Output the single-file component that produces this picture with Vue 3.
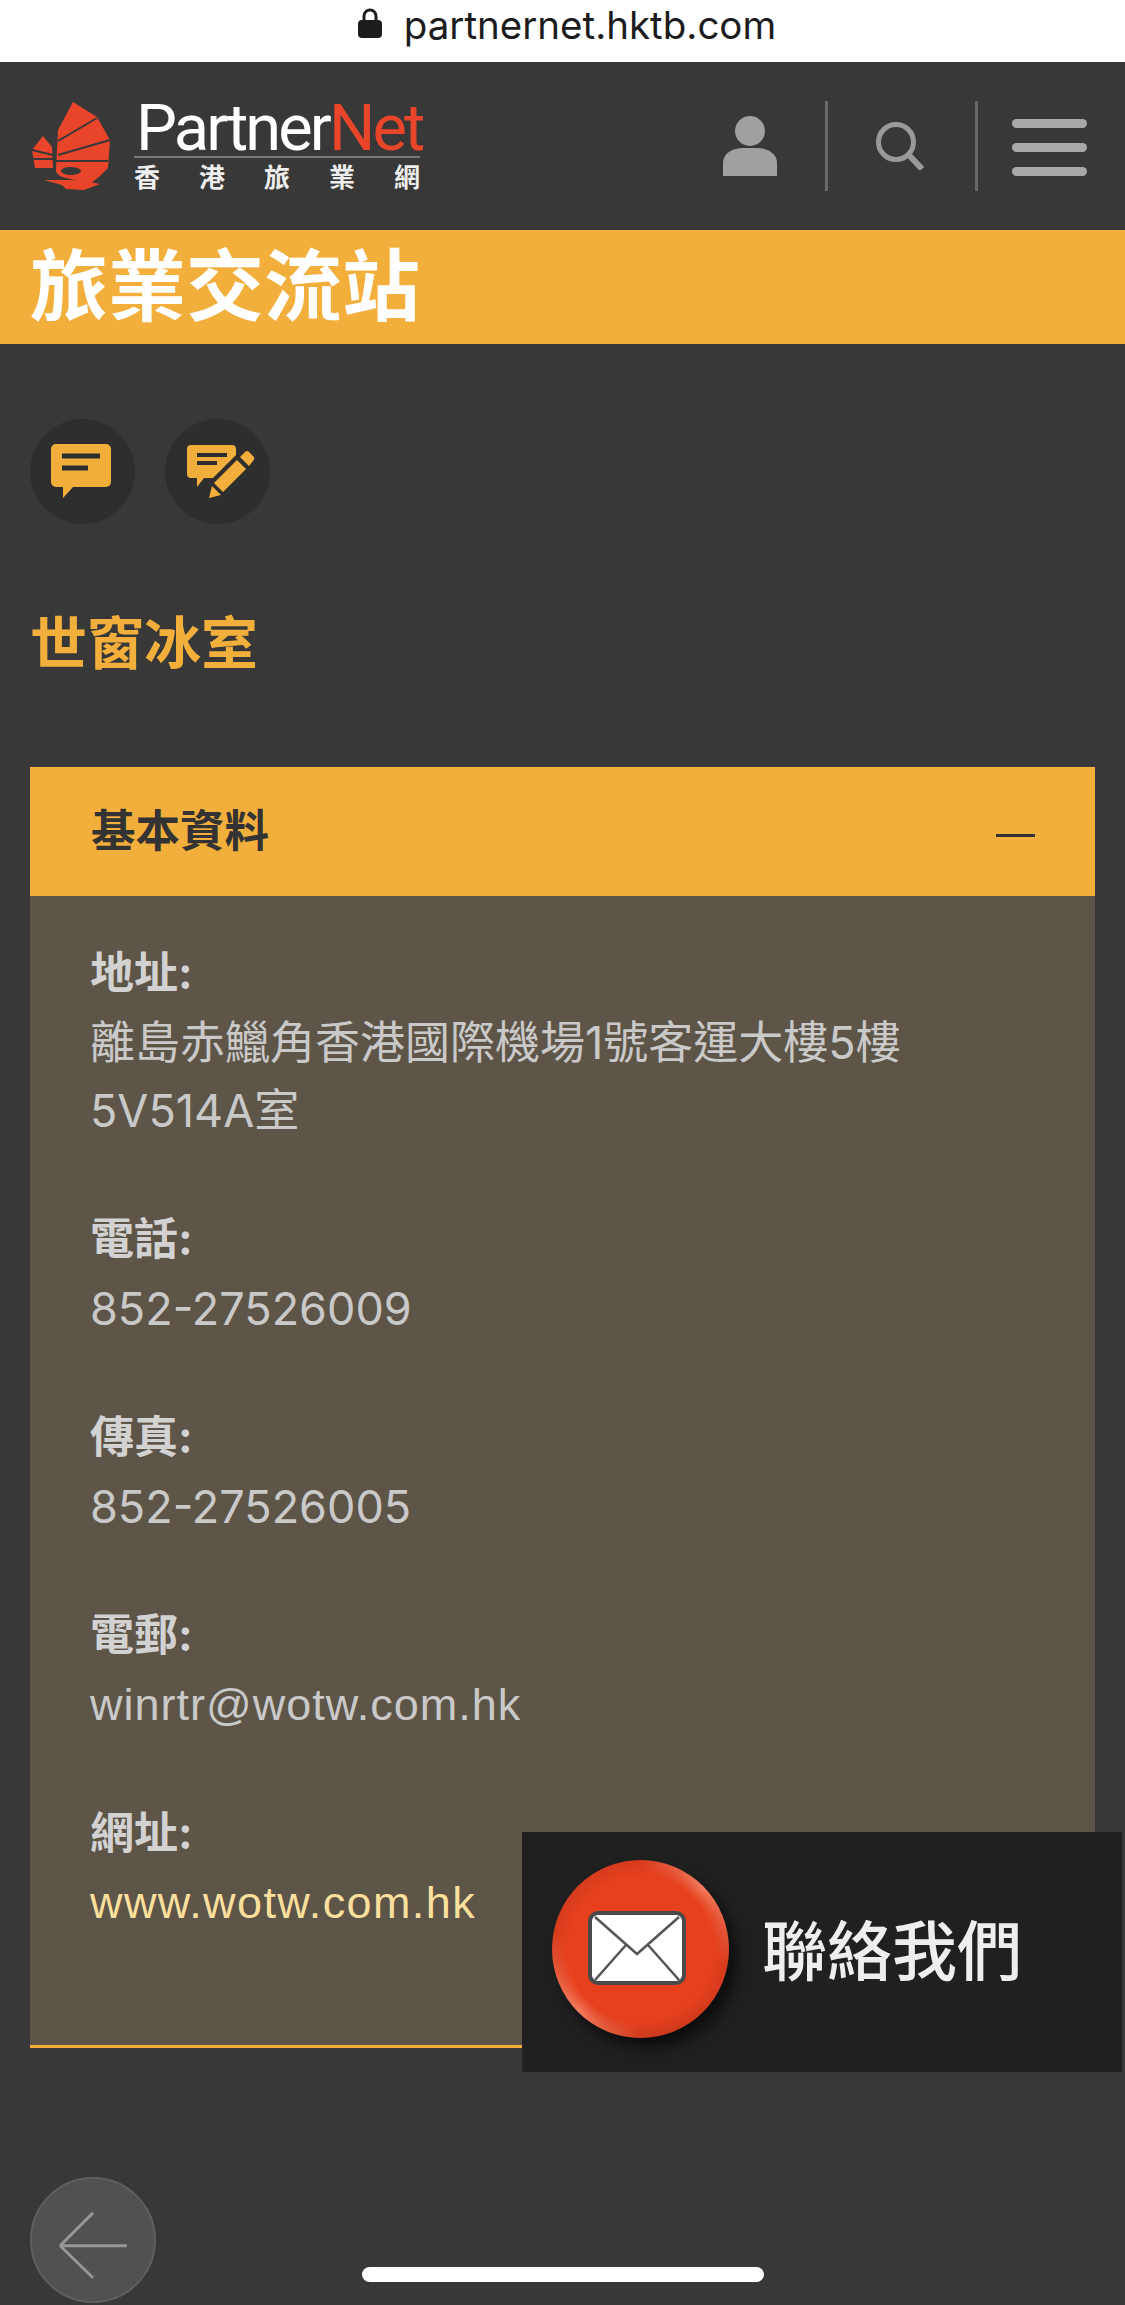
<template>
  <div class="pagina">
    <div class="barra-url">
      <svg class="candado" viewBox="0 0 24 30" width="24" height="30">
        <path d="M6 13V8a6 6 0 0 1 12 0v5" fill="none" stroke="#1c1c1e" stroke-width="3" />
        <rect x="0" y="12" width="24" height="18" rx="4" fill="#1c1c1e" />
      </svg>
      <span>partnernet.hktb.com</span>
    </div>

    <header class="cabecera">
      <div class="logo">
        <svg class="junco" viewBox="0 0 84 92" width="84" height="92">
          <path d="M43 2 67 17 80 40 78 68H26L28 30Z" fill="#e8452a" />
          <path d="M13 36 22 47 23 68H5L2 50Z" fill="#e8452a" />
          <path d="M28 41 67 18M28 55 80 40M2 50 23 55M3 59H23M26 61H78" stroke="#383838" stroke-width="2" fill="none" />
          <path d="M26 68H78L70 76 60 84 36 78 30 76 26 72ZM14 80 40 80 60 82 70 84 54 90 36 89 32 85Z" fill="#e8452a" />
          <ellipse cx="41" cy="71" rx="10" ry="4" fill="#383838" />
        </svg>
        <div class="logo-texto">
          <div class="logo-nombre">Partner<span>Net</span></div>
          <div class="logo-chino">
            <span v-for="c in logoChino" :key="c">{{ c }}</span>
          </div>
        </div>
      </div>
      <nav class="acciones">
        <svg class="icono-usuario" viewBox="0 0 54 60" width="54" height="60">
          <circle cx="27" cy="15" r="15" fill="#a0a0a0" />
          <path d="M0 60V47C0 37 10 32 20 32H34C44 32 54 37 54 47V60Z" fill="#a0a0a0" />
        </svg>
        <i class="separador"></i>
        <svg class="icono-buscar" viewBox="0 0 48 48" width="48" height="48">
          <circle cx="20" cy="20" r="17.500" fill="none" stroke="#999" stroke-width="5" />
          <path d="M32 32 46 47" stroke="#999" stroke-width="6" fill="none" />
        </svg>
        <i class="separador"></i>
        <div class="hamburguesa"><i></i><i></i><i></i></div>
      </nav>
    </header>

    <div class="banda-titulo"><h1>旅業交流站</h1></div>

    <div class="botones">
      <button class="btn-redondo">
        <svg class="icono-mensaje" viewBox="0 0 60 55" width="60" height="55">
          <path d="M5 0H55A5 5 0 0 1 60 5V38A5 5 0 0 1 55 43H22L12 54V43H5A5 5 0 0 1 0 38V5A5 5 0 0 1 5 0Z" fill="#f3af3c" />
          <path d="M11 12H49M11 24H37" stroke="#2e2e2e" stroke-width="5" />
        </svg>
      </button>
      <button class="btn-redondo">
        <svg class="icono-editar" viewBox="0 0 68 54" width="68" height="54">
          <path d="M4 0H45a4 4 0 0 1 4 4V10L26 33H17L10 42V33H4a4 4 0 0 1-4-4V4a4 4 0 0 1 4-4Z" fill="#f3af3c" />
          <path d="M10 10H40M10 18H30" stroke="#2e2e2e" stroke-width="4" />
          <path d="M22 53 25 41 34 50ZM27 38 50 15 59 24 36 47ZM53 12 58 7Q60 5 62 7L67 12Q68 14 66 16L62 21Z" fill="#f3af3c" />
        </svg>
      </button>
    </div>

    <h2 class="nombre-empresa">世窗冰室</h2>

    <section class="panel">
      <div class="panel-cabecera">
        <span>基本資料</span>
        <i class="guion"></i>
      </div>
      <div class="panel-cuerpo">
        <div v-for="d in datos" :key="d.titulo" class="dato">
          <strong>{{ d.titulo }}:</strong>
          <p v-for="l in d.lineas" :key="l" :class="{ enlace: d.enlace, latina: d.latina }">{{ l }}</p>
        </div>
      </div>
    </section>

    <div class="contacto">
      <div class="boton-rojo">
        <svg viewBox="0 0 98 74" width="98" height="74">
          <rect x="2" y="2" width="94" height="70" rx="8" fill="#fff" stroke="#4a4a4a" stroke-width="4" />
          <path d="M7 6 49 43 91 6M7 69 38 34M91 69 60 34" fill="none" stroke="#555" stroke-width="2.500" />
        </svg>
      </div>
      <span class="contacto-texto">聯絡我們</span>
    </div>

    <button class="volver">
      <svg viewBox="0 0 126 126" width="122" height="122">
        <path d="M29 69 63 35M29 69 63 102M29 69H98" fill="none" stroke="#979797" stroke-width="3" />
      </svg>
    </button>
    <div class="indicador"></div>
  </div>
</template>

<script setup>
const logoChino = ['香', '港', '旅', '業', '網']

const datos = [
  { titulo: '地址', lineas: ['離島赤鱲角香港國際機場1號客運大樓5樓', '5V514A室'] },
  { titulo: '電話', lineas: ['852-27526009'] },
  { titulo: '傳真', lineas: ['852-27526005'] },
  { titulo: '電郵', lineas: ['winrtr@wotw.com.hk'], latina: true },
  { titulo: '網址', lineas: ['www.wotw.com.hk'], enlace: true, latina: true },
]
</script>

<style>
html, body { margin: 0; background: #383838; }
</style>

<style scoped>
.pagina { position: relative; width: 1125px; height: 2305px; overflow: hidden; background: #383838; font-family: "Liberation Sans", "Noto Sans CJK TC", sans-serif; }

.barra-url { height: 62px; background: #fff; display: flex; align-items: center; justify-content: center; gap: 22px; padding-left: 9px; box-sizing: border-box; color: #1c1c1e; font-family: Inter, "Liberation Sans", sans-serif; font-size: 38.500px; line-height: 50px; }
.candado { margin-top: -16px; }
.barra-url span { margin-top: -12px; }

.cabecera { height: 168px; display: flex; justify-content: space-between; padding: 38px 38px 0 30px; box-sizing: border-box; }
.logo { display: flex; gap: 20px; height: 92px; }
.junco { flex: none; }
.logo-texto { width: 286px; }
.logo-nombre { padding-left: 2px; font-family: Roboto, "Liberation Sans", sans-serif; font-weight: 400; font-size: 65px; letter-spacing: -2.900px; line-height: 56px; height: 58px; box-sizing: border-box; color: #fff; border-bottom: 2px solid #777; }
.logo-nombre span { color: #e8452a; }
.logo-chino { display: flex; justify-content: space-between; margin-top: 6px; font-size: 26px; line-height: 28px; font-weight: 700; color: #eee; }

.acciones { display: flex; align-items: center; height: 90px; margin-top: 1px; }
.icono-usuario { margin: 0 48px 0 0; }
.separador { width: 3px; height: 90px; background: #686868; }
.icono-buscar { margin: 0 51px 0 48px; }
.hamburguesa { display: flex; flex-direction: column; gap: 15px; width: 75px; margin: 3px 0 0 34px; }
.hamburguesa i { height: 9px; border-radius: 5px; background: #a9a9a9; }

.banda-titulo { height: 114px; box-sizing: border-box; padding: 4px 0 0 30px; background: #f3af3c; }
.banda-titulo h1 { margin: 0; font-size: 78px; line-height: 108px; font-weight: 700; color: #fff; }

.botones { display: flex; gap: 30px; padding: 75px 0 0 30px; }
.btn-redondo { width: 105px; height: 105px; padding: 0; border: none; border-radius: 50%; background: #2e2e2e; display: flex; align-items: center; justify-content: center; }
.icono-mensaje { margin-right: 4px; }
.icono-editar { margin-left: 7px; }

.nombre-empresa { margin: 90px 0 0 30px; font-size: 57px; line-height: 60px; font-weight: 700; color: #f3af3c; }

.panel { width: 1065px; margin: 93px 0 0 30px; background: #5d5547; border-bottom: 3px solid #f3af3c; }
.panel-cabecera { height: 129px; box-sizing: border-box; padding: 0 60px 8px 61px; background: #f3af3c; display: flex; justify-content: space-between; align-items: center; font-size: 44.500px; font-weight: 700; color: #333; }
.guion { width: 39px; height: 3px; margin-top: 16px; background: #333; }
.panel-cuerpo { height: 1149px; box-sizing: border-box; padding: 45px 60px 0; font-family: Inter, "Noto Sans CJK TC", sans-serif; font-size: 45px; line-height: 68px; color: #c9c9c9; }
.dato { margin-bottom: 62px; }
.dato strong { display: block; font-weight: 700; color: #d2d2d2; font-size: 44px; line-height: 64px; margin-bottom: 4px; }
.dato p { margin: 0; }
.latina { font-family: "Liberation Sans", sans-serif; letter-spacing: 1px; }
.enlace { color: #fbdf9d; letter-spacing: 1.400px; }

.contacto { position: absolute; left: 522px; top: 1832px; width: 600px; height: 240px; background: #202020; display: flex; align-items: center; }
.boton-rojo { width: 177px; height: 178px; margin: -6px 0 0 30px; border-radius: 50%; background: radial-gradient(circle at 50% 50%, #e6401c 0 58%, rgba(216, 60, 30, 0) 69%), conic-gradient(from 0deg, #d83c1e 0deg, #f27a5c 45deg, #d83c1e 100deg, #cf3a1c 180deg, #f27a5c 225deg, #d83c1e 280deg, #d83c1e 360deg); box-shadow: 8px 10px 14px rgba(0, 0, 0, 0.6); display: flex; align-items: center; justify-content: center; }
.boton-rojo svg { margin: -3px 0 0 -8px; filter: blur(0.5px); }
.contacto-texto { margin: -10px 0 0 33px; font-size: 65px; font-weight: 500; color: #eee; filter: blur(0.6px); white-space: nowrap; }

.volver { position: absolute; left: 30px; top: 2177px; width: 126px; height: 126px; padding: 0; border-radius: 50%; border: 2px solid #5f5f5f; background: #515151; box-sizing: border-box; }
.volver svg { display: block; }
.indicador { position: absolute; left: 362px; top: 2267px; width: 402px; height: 15px; border-radius: 8px; background: #fff; }
</style>
